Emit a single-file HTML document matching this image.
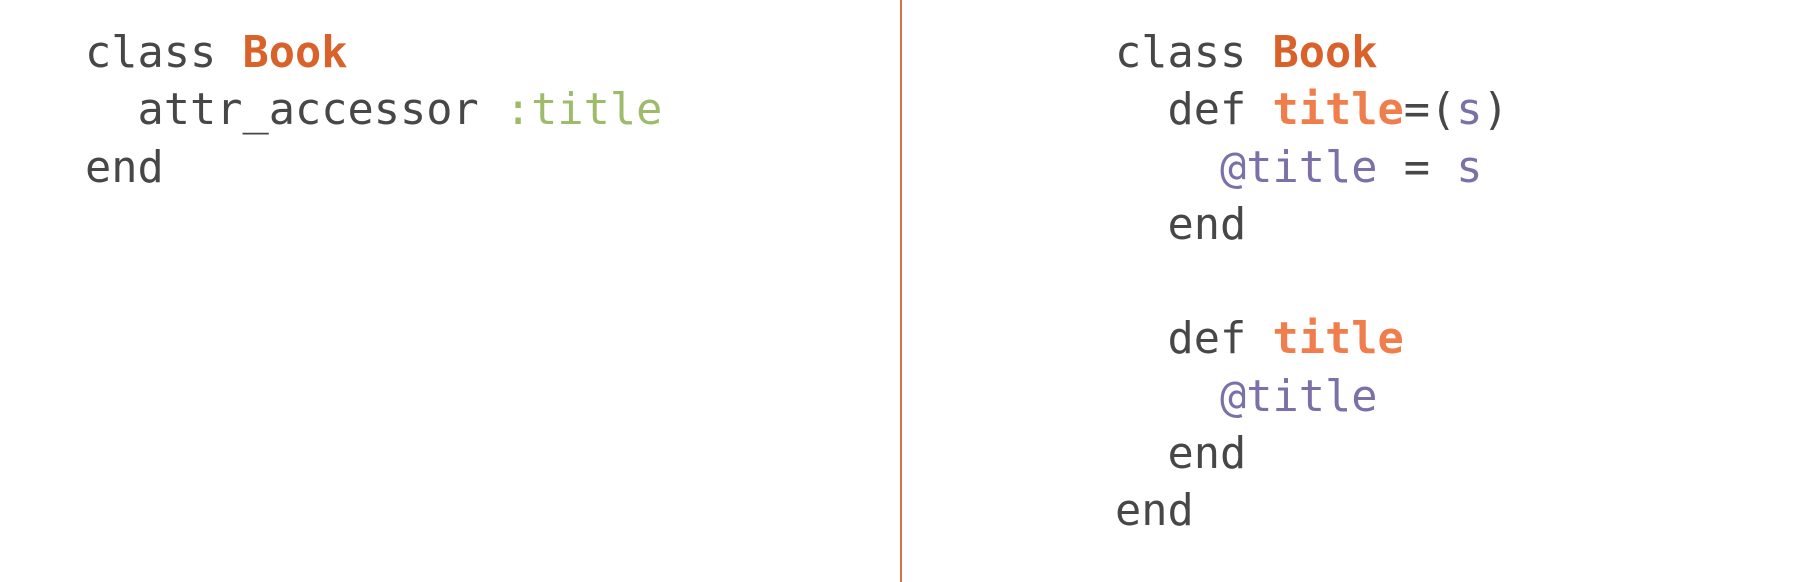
<!DOCTYPE html>
<html><head><style>
html,body{margin:0;padding:0;background:#fff;width:1796px;height:582px;overflow:hidden;position:relative}
pre{position:absolute;margin:0;font-family:"DejaVu Sans Mono","Liberation Mono",monospace;font-size:43.6px;line-height:57.3px;color:#474747;top:25px}
.k{color:#d9622b;font-weight:bold}
.m{color:#f07e4c;font-weight:bold}
.s{color:#9dbb6b}
.i{color:#7b70a8}
.line{position:absolute;left:900px;top:0;width:2px;height:582px;background:#d9714f}
</style></head><body>
<pre style="left:85px">class <span class="k">Book</span>
  attr_accessor <span class="s">:title</span>
end</pre>
<div class="line"></div>
<pre style="left:1115px">class <span class="k">Book</span>
  def <span class="m">title</span>=(<span class="i">s</span>)
    <span class="i">@title</span> = <span class="i">s</span>
  end

  def <span class="m">title</span>
    <span class="i">@title</span>
  end
end</pre>
</body></html>
